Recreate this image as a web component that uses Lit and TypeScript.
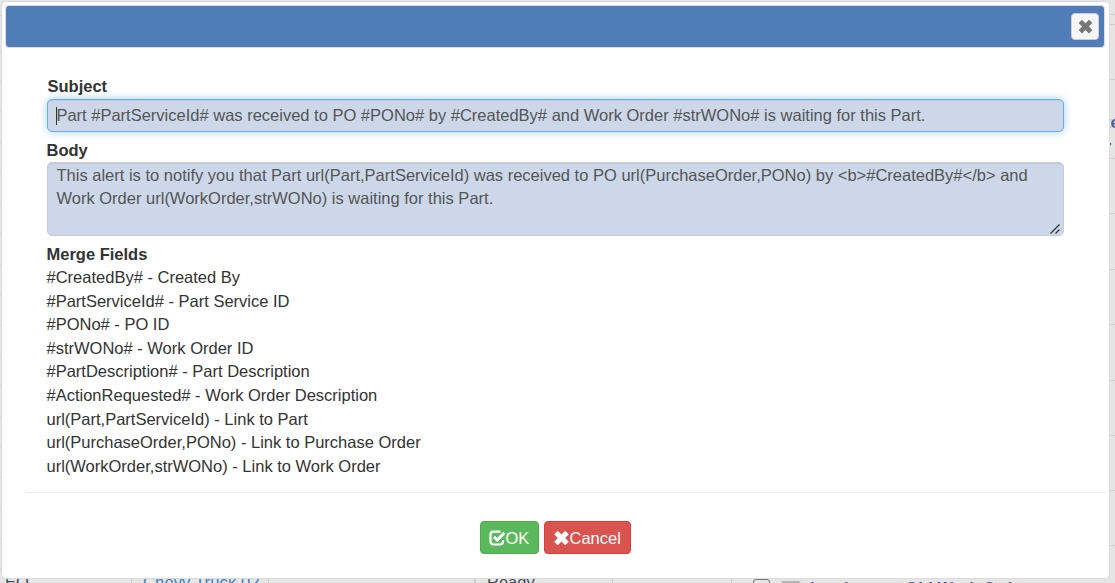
import { css, html, LitElement } from "lit";
import { customElement } from "lit/decorators.js";

const CROSS =
  "M3.2 0.5 L6 3.3 L8.8 0.5 L11.5 3.2 L8.7 6 L11.5 8.8 L8.8 11.5 L6 8.7 L3.2 11.5 L0.5 8.8 L3.3 6 L0.5 3.2 Z";

@customElement("page-behind")
export class PageBehind extends LitElement {
  leftRows = [15, 35, 29, 29, 30, 29, 30, 29, 30, 29, 30, 29, 29, 30, 29, 30, 29, 30, 29];
  rightRows = [14, 9, 54, 78, 54, 55, 54, 55, 54, 54, 54];

  render() {
    return html`
      <div class="page">
        <div class="sides">
          <div class="left">
            ${this.leftRows.map((h) => html`<div class="row" style="height:${h}px"></div>`)}
          </div>
          <div class="right">
            ${this.rightRows.map(
              (h, i) => html`<div class="row" style="height:${h}px">
                ${i === 3
                  ? html`<div class="title">te</div>
                      <div class="title next">r</div>`
                  : ""}
              </div>`
            )}
          </div>
        </div>
        <div class="bottom">
          <div class="cell id">EQ</div>
          <div class="cell unit">Chevy Truck 02</div>
          <div class="cell blank"></div>
          <div class="cell state">Ready</div>
          <div class="cell rest"></div>
          <div class="alert">
            <span class="check"></span>
            <span class="caret"></span>
            <b>Invoices on Old Work Orders</b>
          </div>
        </div>
      </div>
    `;
  }

  static styles = css`
    :host {
      display: block;
    }
    .page {
      display: flex;
      flex-direction: column;
      height: 583px;
      overflow: hidden;
      background: #e5e5e5;
      font-family: "Liberation Sans", Arial, sans-serif;
      font-size: 16.5px;
      color: #444b58;
    }
    .sides {
      display: flex;
      justify-content: space-between;
      height: 573px;
      flex: none;
      overflow: hidden;
    }
    .left {
      width: 4px;
    }
    .right {
      width: 10px;
    }
    .row {
      display: flow-root;
      border-bottom: 1px solid #d0d0d0;
    }
    .title {
      margin-top: 31px;
      font-weight: bold;
      line-height: 23.57px;
      color: #4e5c93;
    }
    .next {
      margin: 0;
    }
    .bottom {
      display: flex;
      height: 30px;
      flex: none;
      line-height: 19px;
    }
    .cell {
      box-sizing: border-box;
      border-right: 1px solid #cccccc;
    }
    .id {
      width: 132px;
      padding-left: 5px;
    }
    .unit {
      width: 137px;
      padding-left: 11px;
      letter-spacing: 0.15px;
      color: #3c82c4;
    }
    .blank {
      width: 207px;
      border-right-width: 2px;
    }
    .state {
      width: 137px;
      padding-left: 11px;
    }
    .rest {
      width: 119px;
    }
    .alert {
      display: flex;
      padding: 6px 0 0 21px;
      color: #4e5c93;
    }
    .alert b {
      padding-left: 9px;
      white-space: nowrap;
    }
    .check {
      box-sizing: border-box;
      width: 17px;
      height: 17px;
      border: 1px solid #777777;
      border-radius: 3px;
    }
    .caret {
      margin: 2px 0 0 11px;
      border: 10px solid transparent;
      border-top-color: #b5b5b5;
      border-bottom-width: 0;
      height: 0;
    }
  `;
}

@customElement("alert-dialog")
export class AlertDialog extends LitElement {
  fields = [
    "#CreatedBy# - Created By",
    "#PartServiceId# - Part Service ID",
    "#PONo# - PO ID",
    "#strWONo# - Work Order ID",
    "#PartDescription# - Part Description",
    "#ActionRequested# - Work Order Description",
    "url(Part,PartServiceId) - Link to Part",
    "url(PurchaseOrder,PONo) - Link to Purchase Order",
    "url(WorkOrder,strWONo) - Link to Work Order",
  ];

  render() {
    return html`
      <div class="dialog">
        <div class="titlebar">
          <button class="close">
            <svg width="15" height="15" viewBox="0 0 12 12"><path d=${CROSS} /></svg>
          </button>
        </div>
        <div class="content">
          <div class="label first">Subject</div>
          <div class="field subject">
            <span class="cursor"></span>Part #PartServiceId# was received to PO #PONo# by #CreatedBy# and Work Order #strWONo# is waiting for this Part.
          </div>
          <div class="label second">Body</div>
          <div class="field body">
            <div>This alert is to notify you that Part url(Part,PartServiceId) was received to PO url(PurchaseOrder,PONo) by &lt;b&gt;#CreatedBy#&lt;/b&gt; and Work Order url(WorkOrder,strWONo) is waiting for this Part.</div>
            <svg class="grip" width="12" height="12" viewBox="0 0 12 12">
              <path d="M1.5 10.5 L10.5 1.5 M6.5 10.5 L10.5 6.5" />
            </svg>
          </div>
          <div class="label third">Merge Fields</div>
          ${this.fields.map((f) => html`<div class="merge">${f}</div>`)}
        </div>
        <div class="actions">
          <button class="btn ok">
            <svg width="17" height="16" viewBox="0 0 17 16">
              <path
                d="M11.5 1.7 H4.5 Q1.5 1.7 1.5 4.5 V11.5 Q1.5 14.5 4.5 14.5 H11 Q14 14.5 14 11.5 V10"
                fill="none" stroke="#fff" stroke-width="2.2"
              />
              <path d="M5 6.8 L8.3 10 L15.5 2.8" fill="none" stroke="#fff" stroke-width="3" />
            </svg>OK
          </button>
          <button class="btn cancel">
            <svg width="17" height="16" viewBox="0 0 12 12"><path fill="#fff" d=${CROSS} /></svg>Cancel
          </button>
        </div>
      </div>
    `;
  }

  static styles = css`
    :host {
      display: block;
    }
    .dialog {
      box-sizing: border-box;
      width: 1109px;
      height: 578px;
      padding: 3px 4px 3px 3px;
      background: #fff;
      border: 1px solid #dddddd;
      border-radius: 5px;
      font-family: "Liberation Sans", Arial, sans-serif;
      font-size: 16.5px;
      line-height: 23.57px;
      color: #333;
    }
    .titlebar {
      box-sizing: border-box;
      display: flex;
      align-items: center;
      justify-content: flex-end;
      height: 43px;
      padding-right: 5px;
      background: #507cb9;
      border: 1px solid #dddddd;
      border-radius: 4px;
    }
    .close {
      display: flex;
      align-items: center;
      justify-content: center;
      box-sizing: border-box;
      width: 28px;
      height: 27px;
      padding: 0;
      background: #f6f6f6;
      border: 1px solid #cccccc;
      border-radius: 4px;
    }
    .close path {
      fill: #777;
    }
    .content {
      box-sizing: border-box;
      height: 445px;
      margin: 0 0 0 21px;
      padding: 27px 20px 0 20.5px;
      border-bottom: 1px solid #eee;
    }
    .label {
      font-weight: bold;
    }
    .first {
      height: 24px;
      padding-left: 1px;
    }
    .field {
      box-sizing: border-box;
      width: 1017px;
      margin-left: 0.5px;
      padding: 4px 9px;
      background: #ccd8e9;
      border: 1px solid #ccc;
      border-radius: 5px;
      color: #555;
      box-shadow: inset 0 1px 1px rgba(0, 0, 0, 0.075);
    }
    .subject {
      display: flex;
      height: 33px;
      padding-left: 8.4px;
      white-space: nowrap;
      border-color: #66afe9;
      box-shadow: inset 0 1px 1px rgba(0, 0, 0, 0.075), 0 0 9px rgba(102, 175, 233, 0.6);
    }
    .cursor {
      width: 1px;
      height: 18px;
      margin: 3px -1px 0 0;
      background: #333;
    }
    .second {
      height: 23px;
      padding-top: 7px;
    }
    .body {
      display: grid;
      height: 74px;
      padding: 0 2px 0 8.5px;
    }
    .body div {
      width: 990px;
      height: 60px;
      padding-top: 1px;
      line-height: 23px;
    }
    .grip {
      justify-self: end;
      margin-top: -2px;
      stroke: #333;
      stroke-width: 1.3;
    }
    .third {
      height: 23.2px;
      padding-top: 7px;
    }
    .actions {
      display: flex;
      justify-content: center;
      gap: 5px;
      padding-top: 28px;
    }
    .btn {
      display: flex;
      align-items: center;
      box-sizing: border-box;
      height: 33px;
      padding: 2px 0 0 8px;
      border: 1px solid;
      border-radius: 4px;
      color: #fff;
      font: inherit;
    }
    .ok {
      width: 59px;
      background: #5cb85c;
      border-color: #4cae4c;
    }
    .cancel {
      width: 87px;
      background: #d9534f;
      border-color: #d43f3a;
    }
    .btn svg {
      flex: none;
      margin-top: -1px;
    }
  `;
}

@customElement("app-root")
export class AppRoot extends LitElement {
  render() {
    return html`
      <page-behind></page-behind>
      <alert-dialog class="overlay"></alert-dialog>
    `;
  }

  static styles = css`
    :host {
      display: block;
      position: relative;
      height: 583px;
      overflow: hidden;
    }
    .overlay {
      position: absolute;
      left: 1px;
      top: 1px;
    }
  `;
}
